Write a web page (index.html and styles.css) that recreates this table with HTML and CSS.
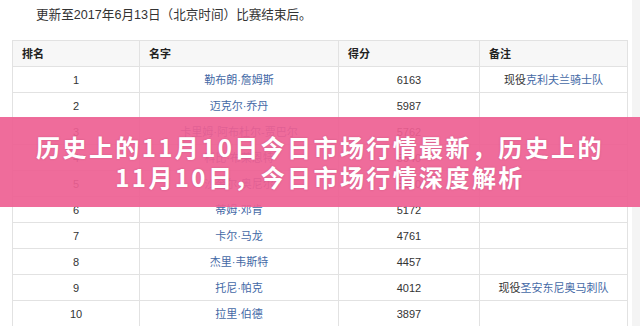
FILE: index.html
```html
<!DOCTYPE html>
<html lang="zh-CN">
<head>
<meta charset="utf-8">
<title>历史上的11月10日今日市场行情</title>
<link rel="stylesheet" href="styles.css">
</head>
<body>
<div class="page">
  <main class="main">
    <p class="note">更新至2017年6月13日（北京时间）比赛结束后。</p>
    <table class="rank">
      <colgroup>
        <col class="c1"><col class="c2"><col class="c3"><col class="c4">
      </colgroup>
      <thead>
        <tr><th>排名</th><th>名字</th><th>得分</th><th>备注</th></tr>
      </thead>
      <tbody>
        <tr><td>1</td><td><a>勒布朗·詹姆斯</a></td><td>6163</td><td>现役<a>克利夫兰骑士队</a></td></tr>
        <tr><td>2</td><td><a>迈克尔·乔丹</a></td><td>5987</td><td></td></tr>
        <tr><td>3</td><td><a>卡里姆·阿布杜尔-贾巴尔</a></td><td>5762</td><td></td></tr>
        <tr><td>4</td><td><a>科比·布莱恩特</a></td><td>5640</td><td></td></tr>
        <tr><td>5</td><td><a>沙奎尔·奥尼尔</a></td><td>5250</td><td></td></tr>
        <tr><td>6</td><td><a>蒂姆·邓肯</a></td><td>5172</td><td></td></tr>
        <tr><td>7</td><td><a>卡尔·马龙</a></td><td>4761</td><td></td></tr>
        <tr><td>8</td><td><a>杰里·韦斯特</a></td><td>4457</td><td></td></tr>
        <tr><td>9</td><td><a>托尼·帕克</a></td><td>4012</td><td>现役<a>圣安东尼奥马刺队</a></td></tr>
        <tr><td>10</td><td><a>拉里·伯德</a></td><td>3897</td><td></td></tr>
      </tbody>
    </table>
  </main>
  <aside class="strip"></aside>
  <div class="banner">
    <h1 class="title">历史上的11月10日今日市场行情最新，历史上的<br>11月10日，今日市场行情深度解析</h1>
  </div>
</div>
</body>
</html>
```

FILE: styles.css
```css
html, body {
  margin: 0;
  padding: 0;
  background: #ffffff;
  overflow: hidden;
}
.page {
  position: relative;
  display: flex;
  width: 640px;
  height: 326px;
  overflow: hidden;
  font-family: "Liberation Sans", "Noto Sans CJK SC", sans-serif;
  color: #333333;
}
.main {
  flex: 1;
  padding-left: 12px;
}
.strip {
  width: 8px;
  background: #f4f4f4;
}
.note {
  margin: 0;
  padding: 7px 0 0 24px;
  font-size: 12.6px;
  line-height: 16px;
  height: 17px;
  color: #333333;
}
.rank {
  margin-top: 16px;
  width: 615px;
  border-collapse: collapse;
  table-layout: fixed;
  font-size: 11px;
}
.c1 { width: 127px; }
.c2 { width: 199px; }
.c3 { width: 141px; }
.c4 { width: 148px; }
.rank th, .rank td {
  border: 1px solid #e2e2e2;
  height: 25px;
  padding: 0;
  line-height: 14px;
  white-space: nowrap;
}
.rank th {
  background: #f7f7f7;
  text-align: left;
  padding-left: 9px;
  font-weight: bold;
  color: #222222;
}
.rank td {
  text-align: center;
  color: #333333;
}
.rank a {
  color: #4469a6;
}
.banner {
  position: absolute;
  left: 0;
  top: 117px;
  width: 640px;
  height: 90px;
  background: rgba(238, 96, 147, 0.92);
  display: flex;
  align-items: center;
  justify-content: center;
}
.title {
  margin: 0;
  text-align: center;
  font-family: "Noto Sans CJK SC", sans-serif;
  font-weight: 700;
  font-size: 24px;
  line-height: 30px;
  letter-spacing: 2.4px;
  color: #ffffff;
  text-shadow: 0 0 2px rgba(120, 30, 70, 0.25);
}
```
